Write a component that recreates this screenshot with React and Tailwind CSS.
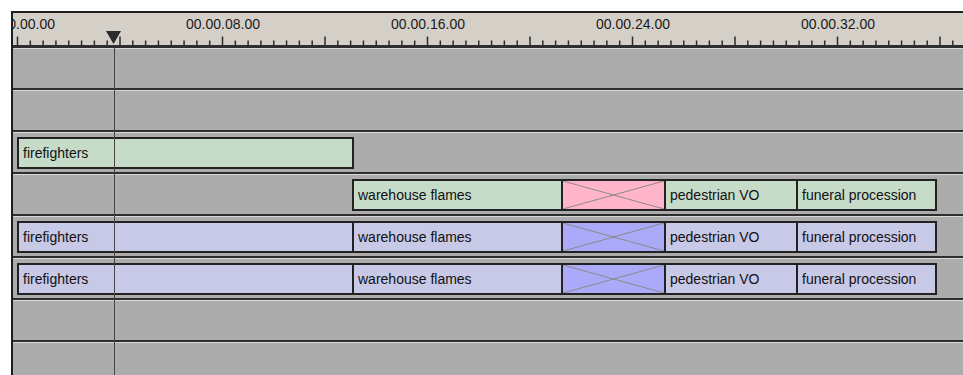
import React from "react";

const TICK = 12.8125;
const ticks = Array.from({ length: 75 }, (_, k) => k);
const labels = ["00.00.00.00", "00.00.08.00", "00.00.16.00", "00.00.24.00", "00.00.32.00"];

const Cross = ({ bg }) => (
  <div className={`relative -ml-[2px] h-[32px] w-[105px] shrink-0 border-2 border-[#222] ${bg}`}>
    <svg className="absolute inset-0 h-full w-full" viewBox="0 0 100 28" preserveAspectRatio="none">
      <line x1="0" y1="0" x2="100" y2="28" stroke="#8a8a8a" strokeWidth="1" vectorEffect="non-scaling-stroke" />
      <line x1="0" y1="28" x2="100" y2="0" stroke="#8a8a8a" strokeWidth="1" vectorEffect="non-scaling-stroke" />
    </svg>
  </div>
);

const Clip = ({ label, className }) => (
  <div
    className={`flex h-[32px] shrink-0 items-center overflow-hidden whitespace-nowrap border-2 border-[#222] pl-1 text-[14px] leading-none text-[#111] ${className}`}
  >
    {label}
  </div>
);

const Row = ({ children }) => (
  <div className="flex h-[42px] items-center border-t border-b-2 border-t-[#d8d8d8] border-b-[#2e2e2e] bg-[#acacac]">
    {children}
  </div>
);

const FullRow = ({ clip, cross }) => (
  <Row>
    <Clip label="firefighters" className={`ml-[4px] w-[337px] ${clip}`} />
    <Clip label="warehouse flames" className={`-ml-[2px] w-[211px] ${clip}`} />
    <Cross bg={cross} />
    <Clip label="pedestrian VO" className={`-ml-[2px] w-[134px] ${clip}`} />
    <Clip label="funeral procession" className={`-ml-[2px] w-[141px] ${clip}`} />
  </Row>
);

export default function App() {
  return (
    <div className="h-[375px] w-[963px] overflow-hidden bg-white pl-[11px] pt-[11px]">
      <div className="relative h-[400px] border-l-2 border-t-2 border-[#1e1e1e] font-['Liberation_Sans',Arial,sans-serif]">
        {/* ruler */}
        <div className="relative h-[35px] overflow-hidden border-b-[3px] border-[#2e2e2e] bg-[#d4d0c8]">
          {labels.map((l, i) => (
            <span
              key={l}
              className="absolute top-[4px] -translate-x-1/2 text-[14px] leading-[14px] text-[#1a1a1a]"
              style={{ left: 5 + i * 16 * TICK }}
            >
              {l}
            </span>
          ))}
          <svg className="absolute left-0 top-0" width="950" height="32">
            {ticks.map((k) => {
              const x = 4.5 + k * TICK;
              const major = k % 8 === 0;
              return (
                <line key={k} x1={x} x2={x} y1={major ? 23.5 : 27.5} y2="32" stroke="#2a2a2a" strokeWidth="1.5" />
              );
            })}
            <polygon points="93,18 108,18 100.5,31" fill="#2b2b2b" />
          </svg>
        </div>

        {/* tracks */}
        <Row />
        <Row />
        <Row>
          <Clip label="firefighters" className="ml-[4px] w-[337px] bg-[#c6dcc9]" />
        </Row>
        <Row>
          <Clip label="warehouse flames" className="ml-[339px] w-[211px] bg-[#c6dcc9]" />
          <Cross bg="bg-[#ffb4c9]" />
          <Clip label="pedestrian VO" className="-ml-[2px] w-[134px] bg-[#c6dcc9]" />
          <Clip label="funeral procession" className="-ml-[2px] w-[141px] bg-[#c6dcc9]" />
        </Row>
        <FullRow clip="bg-[#c8c8e7]" cross="bg-[#aaaaf9]" />
        <FullRow clip="bg-[#c8c8e7]" cross="bg-[#aaaaf9]" />
        <Row />
        <Row />

        {/* playhead */}
        <div className="pointer-events-none absolute bottom-0 left-[101px] top-[35px] w-px bg-[#454545]" />
      </div>
    </div>
  );
}
